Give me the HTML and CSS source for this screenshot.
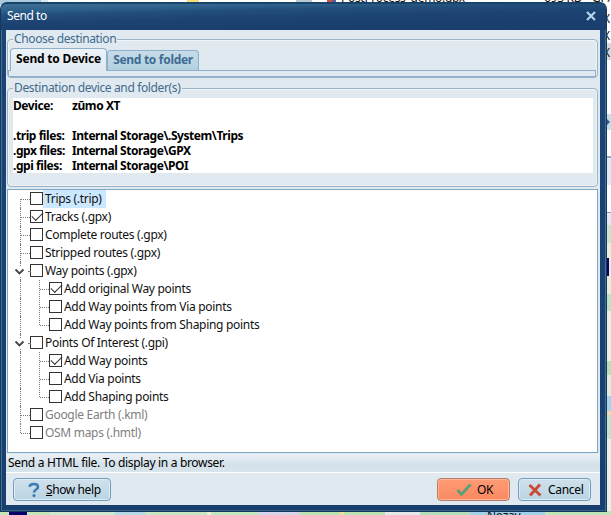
FILE: index.html
```html
<!DOCTYPE html>
<html lang="en">
<head>
<meta charset="utf-8">
<title>Send to</title>
<link rel="stylesheet" href="styles.css">
</head>
<body>
<div class="backdrop">
  <div class="back-top"><i class="folder"></i><i class="fileicon"></i><span class="b-name">PostProcess_demo.gpx</span><span class="b-size">693 KB</span><span class="b-type">GPX</span></div>
  <div class="back-right"><span>X</span><span>X</span><span class="sel">X</span><b class="arrow"></b><b class="navy"></b></div>
  <div class="back-bottom"><i class="navy-tile"></i><i class="road"></i><span>Nozay</span></div>
</div>
<div class="window">
  <header class="titlebar">
    <span class="title">Send to</span>
    <svg class="close" width="12" height="12" viewBox="0 0 12 12"><path d="M2 2l8 8M10 2l-8 8" stroke="#b7d5ee" stroke-width="2.1" fill="none"/></svg>
  </header>
  <main class="client">
    <section class="group destination">
      <span class="legend l1">Choose destination</span>
      <div class="tabs"><div class="tab active"><span>Send to Device</span></div><div class="tab"><span>Send to folder</span></div></div>
      <div class="tab-body"></div>
    </section>
    <section class="group folders">
      <span class="legend l2">Destination device and folder(s)</span>
      <div class="memo">
        <span>Device:</span><span>zūmo XT</span>
        <span class="blank"></span><span></span>
        <span>.trip files:</span><span>Internal Storage\.System\Trips</span>
        <span>.gpx files:</span><span>Internal Storage\GPX</span>
        <span>.gpi files:</span><span>Internal Storage\POI</span>
      </div>
    </section>
    <ul class="tree">
      <li class="row first"><i class="box"></i><span class="selected">Trips (.trip)</span></li>
      <li class="row"><i class="box checked"></i><span>Tracks (.gpx)</span></li>
      <li class="row"><i class="box"></i><span>Complete routes (.gpx)</span></li>
      <li class="row"><i class="box"></i><span>Stripped routes (.gpx)</span></li>
      <li class="row parent"><svg class="chev" width="11" height="9" viewBox="0 0 11 9"><path d="M1.5 2.5l4 4 4-4" stroke="#444" stroke-width="1.8" fill="none"/></svg><i class="box"></i><span>Way points (.gpx)</span></li>
      <li class="row child"><i class="box checked"></i><span>Add original Way points</span></li>
      <li class="row child"><i class="box"></i><span>Add Way points from Via points</span></li>
      <li class="row child end"><i class="box"></i><span>Add Way points from Shaping points</span></li>
      <li class="row parent"><svg class="chev" width="11" height="9" viewBox="0 0 11 9"><path d="M1.5 2.5l4 4 4-4" stroke="#444" stroke-width="1.8" fill="none"/></svg><i class="box"></i><span>Points Of Interest (.gpi)</span></li>
      <li class="row child"><i class="box checked"></i><span>Add Way points</span></li>
      <li class="row child"><i class="box"></i><span>Add Via points</span></li>
      <li class="row child end"><i class="box"></i><span>Add Shaping points</span></li>
      <li class="row off"><i class="box"></i><span>Google Earth (.kml)</span></li>
      <li class="row off last"><i class="box"></i><span>OSM maps (.hmtl)</span></li>
    </ul>
    <div class="status"><span>Send a HTML file. To display in a browser.</span></div>
    <footer class="buttons">
      <button class="btn help"><svg width="12" height="16" viewBox="0 0 12 16"><path d="M1.500 4.800C2 1.200 10 1 10 5 10 7.700 6 7.300 6 10.500" stroke="#3d7cb5" stroke-width="2.600" fill="none"/><circle cx="6" cy="13.600" r="1.600" fill="#3d7cb5"/></svg><span><u>S</u>how help</span></button>
      <button class="btn ok"><svg width="16" height="14" viewBox="0 0 16 14"><path d="M1.500 7l4 4.500L14.500 1.500" stroke="#56a276" stroke-width="2.700" fill="none"/></svg><span>OK</span></button>
      <button class="btn cancel"><svg width="14" height="14" viewBox="0 0 14 14"><path d="M1.500 2l11 10.500M12 1.500L2 12.500" stroke="#c94b36" stroke-width="2.900" fill="none"/></svg><span>Cancel</span></button>
    </footer>
  </main>
</div>
</body>
</html>
```
FILE: styles.css
```css
* { box-sizing: border-box; }
html, body { margin: 0; width: 611px; height: 515px; overflow: hidden; }
body { position: relative; font: 12px/18px "Noto Sans", "Open Sans", sans-serif; letter-spacing: -0.3px; color: #111; background: #fff; }
i, b { font-style: normal; }

.backdrop { position: absolute; inset: 0; }
.back-top { position: absolute; left: 0; top: 0; width: 611px; height: 5px; overflow: hidden; background: linear-gradient(90deg, #a9c9dc 0 41px, #d7e8f2 41px 48px, #fff 48px 296px, #b9c9d4 296px 312px, #fff 312px); }
.back-top span { position: absolute; top: -10px; line-height: 16px; }
.b-name { left: 341px; }
.b-size { left: 544px; }
.b-type { left: 592px; }
.folder { position: absolute; left: 187px; top: 0; width: 12px; height: 5px; background: #f4df79; }
.fileicon { position: absolute; left: 327px; top: 0; width: 9px; height: 5px; background: linear-gradient(90deg, #d64b45 50%, #5b5c9e 50%); }
.back-right { position: absolute; left: 606px; top: 9px; width: 5px; height: 506px; overflow: hidden;
  background: linear-gradient(180deg, #fff 0 105px, #c5dcea 105px 121px, #fff 121px 147px, #8eabc4 147px 149px, #e0eaf2 149px 176px, #fff 176px 181px, #fff 181px 203px, #7e9fc4 203px 204px, #e3eaf1 204px 216px, #c9e7c8 216px 234px, #e8eeda 234px 285px, #bee2c1 285px 302px, #edf0df 302px 352px, #b9dfb9 352px 366px, #e4eddd 366px 387px, #a5d3e9 387px 402px, #f3d9ac 402px 406px, #c3e4c8 406px 430px, #edf0e6 430px); }
.back-right span { display: block; height: 17px; line-height: 19px; text-indent: -3px; }
.back-right .sel { background: #d9d9dc; }
.arrow { position: absolute; left: 0; top: 109px; border: 4px solid transparent; border-left-color: #315e94; }
.navy { position: absolute; left: 0; top: 249px; width: 3px; height: 18px; background: #07006b; }
.back-bottom { position: absolute; left: 0; top: 511px; width: 611px; height: 4px; overflow: hidden; background: linear-gradient(90deg, #c6e6b7 0 50px, #cfe8d1 50px 115px, #b5d9e8 115px 145px, #c7e6c1 145px 207px, #f3efd6 207px 211px, #c3e8bf 211px 258px, #d7d5ec 258px 300px, #bbe4b1 300px 385px, #e6e8e9 385px 420px, #b4deb9 420px 470px, #a1d1e8 470px 545px, #c0e5b6 545px); }
.back-bottom span { position: absolute; left: 487px; top: -2px; line-height: 14px; }
.navy-tile { position: absolute; left: 9px; top: 1px; width: 18px; height: 3px; background: #07006b; }
.road { position: absolute; left: 340px; top: 0; width: 4px; height: 4px; background: #f2df9c; }

.window { position: absolute; left: 0; top: 2px; width: 607px; height: 510px; padding: 0 6px 6px 5px; border: 1px solid #17375c; border-top: 2px solid #174468; border-radius: 7px 7px 0 0; background: linear-gradient(#1c4474, #193f70); overflow: hidden; box-shadow: inset -1px 0 #3e7194, inset 1px 0 #3e7194, inset 0 -1px #356282; }
.titlebar { height: 26px; margin: 0 -6px 0 -5px; padding: 0 9px 2px 6px; display: flex; align-items: center; justify-content: space-between; background: linear-gradient(178.8deg, #3f7196 0, #2d608b 7px, #234f7c 11px, #1c4373 19px, #193c6b 100%); }
.title { color: #fff; letter-spacing: -0.45px; }
.client { height: 475px; background: #e0e9f0; display: flex; flex-direction: column; }

.group { position: relative; margin: 0 2px 0 1px; border: 1px solid #9bb3c7; border-radius: 4px; box-shadow: inset 0 0 0 1px #edf3f7; }
.destination { margin-top: 9px; height: 39px; padding-top: 7px; }
.legend { position: absolute; left: 5px; top: -10px; padding: 0 1px; line-height: 18px; color: #426a8b; background: linear-gradient(#e0e9f0, #e0e9f0) 0 8px / 100% 4px no-repeat; letter-spacing: -0.36px; white-space: nowrap; }
.tabs { display: flex; align-items: flex-end; height: 23px; padding-left: 2px; position: relative; z-index: 1; }
.tab { width: 92px; height: 20px; border: 1px solid #8eb0c9; border-bottom: 0; border-radius: 4px 4px 0 0; background: linear-gradient(#c7dce9, #b2d0e1); color: #3e6c91; font-weight: bold; text-align: center; line-height: 18px; white-space: nowrap; }
.tab.active { width: 97px; height: 23px; margin-bottom: -1px; background: linear-gradient(#edf3f7, #e0e9f0); color: #000; line-height: 20px; letter-spacing: -0.2px; }
.tab-body { height: 7px; margin: 0 1px 0 0; border: 1px solid #8eb0cc; }
.folders { margin-top: 10px; height: 99px; padding: 9px 4px 0 5px; }
.memo { height: 75px; background: #fff; display: grid; grid-template-columns: 59px 1fr; grid-auto-rows: 15px; font-weight: bold; color: #000; line-height: 15px; letter-spacing: -0.43px; white-space: nowrap; }

.tree { list-style: none; margin: 2px 2px 0 1px; padding: 0; height: 264px; border: 1px solid #7fa7c4; background: #fff; }
.row { height: 18px; padding-left: 22px; display: flex; align-items: center; position: relative; white-space: nowrap; }
.row::before { content: ""; position: absolute; left: 12px; top: 0; height: 18px; border-left: 1px dotted #777; }
.row::after { content: ""; position: absolute; left: 13px; top: 9px; width: 9px; border-top: 1px dotted #777; }
.row.first::before { top: 9px; height: 9px; }
.row.last::before { height: 9px; }
.row.parent::after { left: 20px; width: 2px; }
.row.child { padding-left: 41px; background: repeating-linear-gradient(#777 0 1px, #fff 1px 2px) 31px 0 / 1px 18px no-repeat; }
.row.child::after { left: 32px; }
.row.child.end { background-size: 1px 9px; }
.chev { position: absolute; left: 5px; top: 4px; z-index: 1; width: 13px; height: 11px; padding: 1px; background: #fff; }
.box { position: relative; flex: none; width: 13px; height: 13px; top: -0.5px; border: 1px solid #333; background: #fff; }
.box.checked::after { content: ""; position: absolute; left: 1px; top: 1px; width: 10px; height: 5px; border: solid #333; border-width: 0 0 1.400px 1.400px; transform: rotate(-45deg); }
.row span { padding: 0 4px 0 2px; }
.row .selected { background: #cce8ff; }
.off { color: #808080; }

.status { height: 19px; margin: 1px 0 0; padding-left: 2px; background: linear-gradient(#ebf2f6, #d3e0e9 60%, #d9e5ec); border-bottom: 1px solid #fff; line-height: 18px; color: #000; letter-spacing: -0.32px; }
.buttons { display: flex; padding: 5px 9px 0 7px; }
.btn { height: 23px; padding: 0; display: flex; align-items: center; border: 1px solid #719dbf; border-radius: 4px; box-shadow: inset 0 0 0 1px #dcebf4; background: linear-gradient(#cfe1ec, #bad4e3); font: inherit; letter-spacing: inherit; color: #000; }
.help { width: 98px; padding-left: 14px; gap: 6px; letter-spacing: -0.4px; }
.ok { width: 73px; margin-left: auto; padding-left: 18px; gap: 5px; border-color: #b37d6c; box-shadow: inset 0 0 0 1px #ffb394; background: linear-gradient(#ff9b75, #fa8960); }
.cancel { width: 73px; margin-left: 8px; padding-left: 9px; gap: 6px; }
```
